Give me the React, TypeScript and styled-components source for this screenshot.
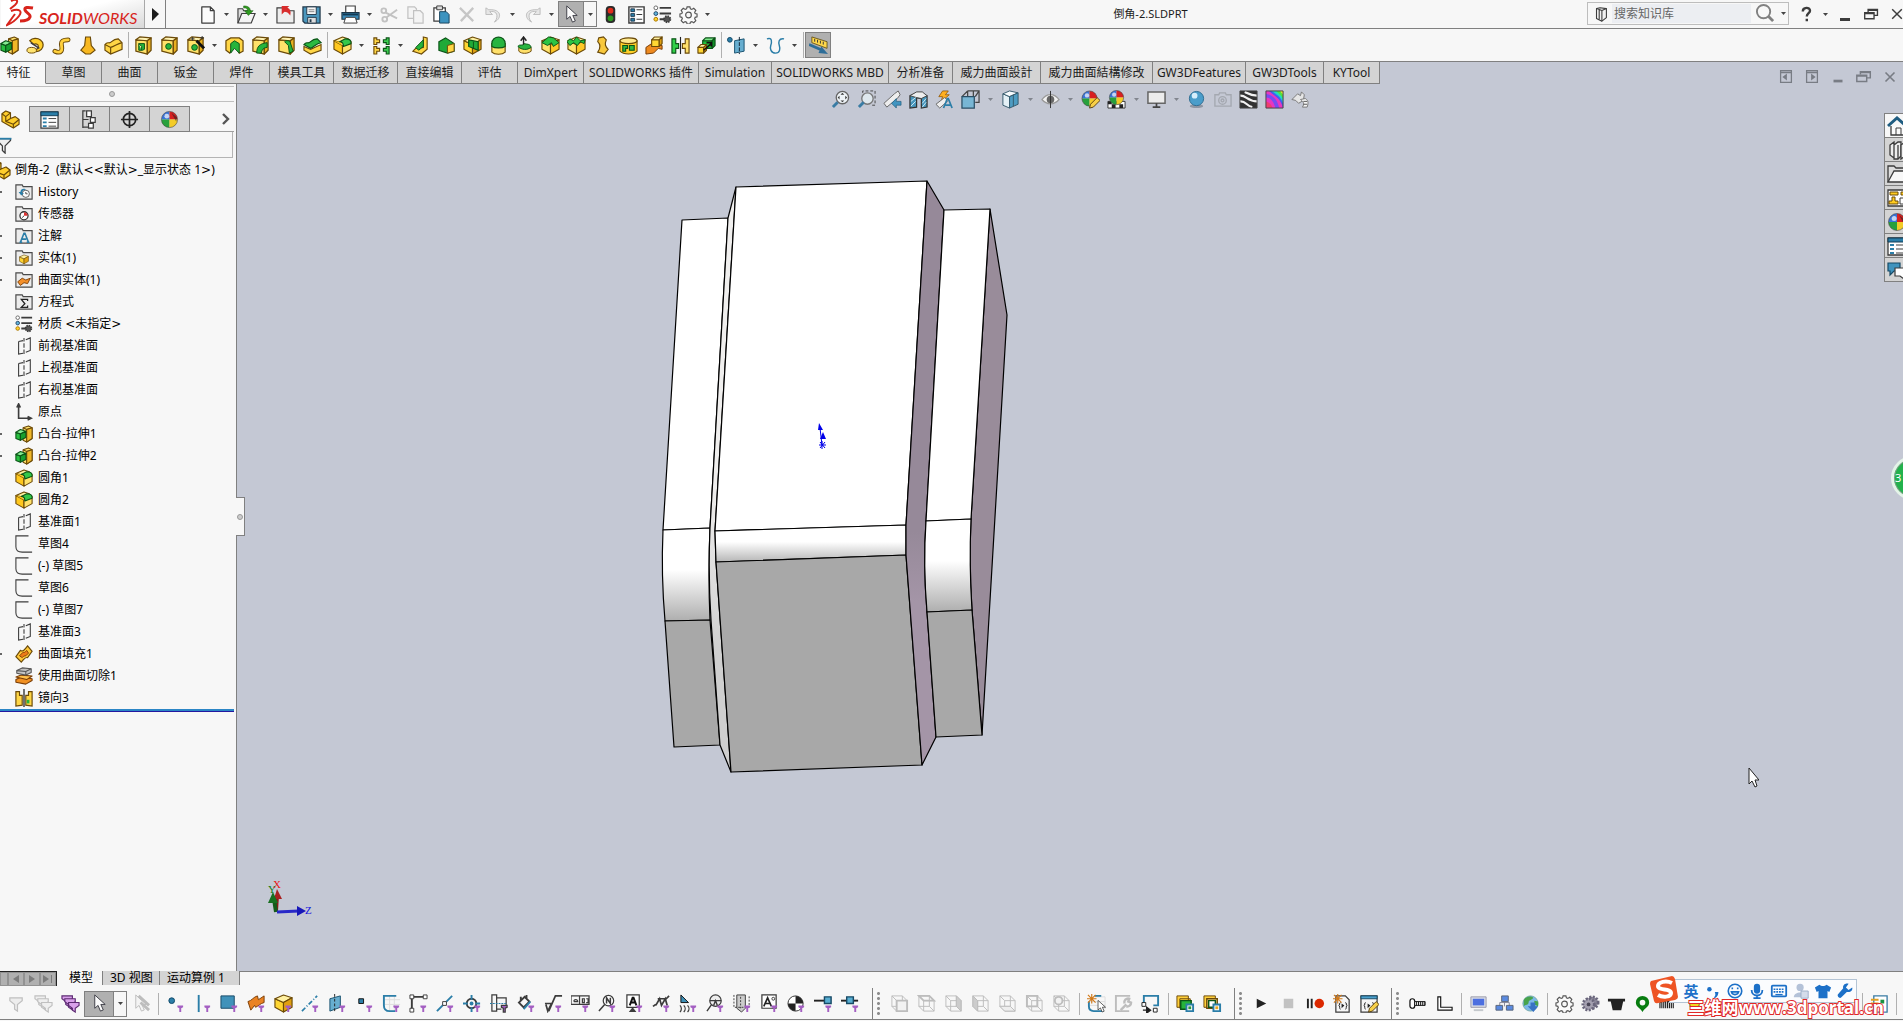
import React from "react";
import styled, { createGlobalStyle } from "styled-components";

const Global = createGlobalStyle`
  *, *::before, *::after { box-sizing: border-box; }
  body { margin: 0; background: #f7f7f7; color: #1c1c1c; overflow: hidden;
    font-family: "Noto Sans", "Noto Sans CJK SC", sans-serif; font-size: 12px; line-height: 18px; }
  button, input { font: inherit; color: inherit; }
  button { border: 0; padding: 0; background: none; cursor: default; }
  svg { display: block; flex: none; }
  ul { list-style: none; margin: 0; padding: 0; }
`;

const LINE = "#808080";
const FACE = "#f7f7f7";
const TAB = "#d4d4d4";
const SCENE = "#c4c8d4";

/* ---------- icon drawing helpers ---------- */
const YS = "#6b4a08";
const GS = "#0b5417";
const K = "#3c3c3c";
const B = "#2b7ea8";

type Tone = [string, string, string, string];
const YEL: Tone = ["#ffd633", "#fff0a0", "#e0a010", YS];
const GRN: Tone = ["#22c03c", "#7fe88c", "#12902a", GS];

const cube = (x: number, y: number, w: number, h: number, d: number, t: Tone) => (
  <g stroke={t[3]} strokeWidth="1.2" strokeLinejoin="round">
    <path d={`M${x} ${y + d}h${w}v${h}h${-w}z`} fill={t[0]} />
    <path d={`M${x} ${y + d}l${d} ${-d}h${w}l${-d} ${d}z`} fill={t[1]} />
    <path d={`M${x + w} ${y + d}l${d} ${-d}v${h}l${-d} ${d}z`} fill={t[2]} />
  </g>
);
const iso = (t: Tone) => (
  <g stroke={t[3]} strokeWidth="1.2" strokeLinejoin="round">
    <path d="M1 5l9 4v10l-9-5z" fill={t[0]} />
    <path d="M1 5l9-4 9 3-9 5z" fill={t[1]} />
    <path d="M19 4v10l-9 5V9z" fill={t[2]} />
  </g>
);
const plate = (
  <g stroke={YS} strokeWidth="1.3" strokeLinejoin="round">
    <path d="M2 4l12 1v14L2 16z" fill="#ffe26a" />
    <path d="M2 4l4-3 12 1-4 3z" fill="#fff3b4" />
    <path d="M14 5l4-3v13l-4 4z" fill="#e8b020" />
  </g>
);
const ball = (cx: number, cy: number, r: number) => (
  <g>
    <path d={`M${cx} ${cy}V${cy - r}A${r} ${r} 0 0 0 ${cx - r} ${cy}z`} fill="#3a74d8" />
    <path d={`M${cx} ${cy}V${cy - r}A${r} ${r} 0 0 1 ${cx + r} ${cy}z`} fill="#d82020" />
    <path d={`M${cx} ${cy}H${cx - r}A${r} ${r} 0 0 0 ${cx} ${cy + r}z`} fill="#28a03c" />
    <path d={`M${cx} ${cy}H${cx + r}A${r} ${r} 0 0 1 ${cx} ${cy + r}z`} fill="#f4cc28" />
    <circle cx={cx - r / 3} cy={cy - r / 2.4} r={r / 3.4} fill="#ffffff" opacity=".7" />
    <circle cx={cx} cy={cy} r={r} fill="none" stroke="#444" strokeWidth=".6" />
  </g>
);
const funnel = <path d="M12 12h6v2l-2 1v4h-2v-4l-2-1z" fill="#a45fc2" />;
const folder = <path d="M1 18V2h7l1 2h10v14z" fill="#ececec" stroke="#4a4a4a" strokeWidth="1.3" />;
const wire = (extra: React.ReactNode) => (
  <g fill="none" stroke="#bdbdbd">
    <path d="M2 2h11v11H2zM7 7h11v11H7zM2 2l5 5M13 2l5 5M2 13l5 5M13 13l5 5" />
    {extra}
  </g>
);
const pencil = <path d="M9 19l1-4 7-7 3 3-7 7z" fill="#f8d048" stroke="#5a4010" />;
const spark = <path d="M5 0v10M0 5h10M1 1l8 8M9 1L1 9" stroke="#d07818" strokeWidth="1.2" />;
const gear = (fill: string, stroke: string) => (
  <g fill={fill} stroke={stroke} strokeWidth="1.2">
    <path d="M8.500 2h3l.5 2 1.500.7 2-1.200 2.200 2.200-1.200 2 .5 1.300 2 .5v3l-2 .5-.5 1.500 1.200 2-2.200 2.200-2-1.200-1.500.5-.5 2h-3l-.5-2-1.500-.5-2 1.200-2.200-2.200 1.200-2-.5-1.500-2-.5v-3l2-.5.500-1.300-1.200-2 2.200-2.200 2 1.200L8 4z" />
    <circle cx="10" cy="10.500" r="3" fill={FACE} />
  </g>
);
const arrow = (fill: string, stroke: string) => (
  <path d="M5 1v14l3.500-3 2.500 6 3-1.200-2.600-5.800H16z" fill={fill} stroke={stroke} strokeLinejoin="round" />
);
const winTiles = (c: string) => <path d="M6 7V4h11v7h-4M2 8h11v7H2zM2 9h11M6 5h11" fill="none" stroke={c} strokeWidth="1.600" />;

const ICONS: Record<string, React.ReactNode> = {
  newDoc: <path d="M4 2h9l4 4v13H4zM13 2v4h4" fill="#fbfbfb" stroke={K} strokeWidth="1.300" strokeLinejoin="round" />,
  open: <g><path d="M1 19V4h5l1 2h7v4" fill="#ddd" stroke={K} strokeWidth="1.200" /><path d="M1 19l4-10h14l-4 10z" fill="#f4f4f4" stroke={K} strokeWidth="1.200" /><path d="M7 1c5 0 7 2 7 5h3l-5 5-4-5h3c0-2-1-3-4-3z" fill="#2f9a20" stroke="#1b6412" strokeWidth=".6" /></g>,
  publish: <g><path d="M1 3h6v3h12v13H1z" fill="#eee" stroke={K} strokeWidth="1.200" /><path d="M6 1h8l-2 2c3 1 4 4 3 8-2-3-4-4-6-4l-3 3z" fill="#d82c2c" /></g>,
  save: <g><path d="M1 2h18v17H3l-2-2z" fill="#4b97bd" stroke="#22384a" strokeWidth="1.300" /><path d="M5 2h10v8H5z" fill="#f5f5f5" stroke="#22384a" /><path d="M7 5h6M7 7h6" stroke="#888" /><path d="M6 13h9v6H6z" fill="#ddd" stroke="#22384a" /><path d="M8 15h2v3H8z" fill="#22384a" /></g>,
  print: <g><path d="M5 8V1h10v7" fill="#fff" stroke={K} strokeWidth="1.200" /><path d="M1 8h18v7H1z" fill="#3889b8" stroke="#1b3446" strokeWidth="1.200" /><path d="M5 13h10l2 6H3z" fill="#fff" stroke={K} /><path d="M2 10h16" stroke="#123a54" strokeWidth="2" /></g>,
  cut: <g fill="none" stroke="#c2c2c2" strokeWidth="2"><circle cx="4" cy="6" r="2.500" /><circle cx="5" cy="15" r="2.500" /><path d="M6 8l12 6M7 13L18 5" /></g>,
  copy: <g fill="#f4f4f4" stroke="#c2c2c2" strokeWidth="1.300"><path d="M2 2h7l2 2v10H2z" /><path d="M8 6h7l3 3v10H8z" /></g>,
  paste: <g><path d="M2 3h12v14H2z" fill="#fff" stroke={K} strokeWidth="1.300" /><path d="M5 1h6v4H5z" fill="#ddd" stroke={K} /><path d="M8 7h7l3 3v9H8z" fill="#3d93bf" stroke="#17425c" /></g>,
  del: <path d="M2 3l14 14M16 3L3 17" stroke="#c6c6c6" strokeWidth="2.400" />,
  undo: <path d="M2 3v7h7L6 7c6-1 9 2 7 8l-2 3c8-4 8-14-6-13z" fill="#e6e6e6" stroke="#bdbdbd" />,
  redo: <path d="M18 3v7h-7l3-3C8 6 5 9 7 15l2 3C1 14 1 4 15 5z" fill="#e6e6e6" stroke="#bdbdbd" />,
  select: arrow("#fbfbfb", "#3c3c44"),
  traffic: <g><rect x="5" y="1" width="10" height="18" rx="4" fill="#2c2c2c" /><circle cx="10" cy="6" r="3" fill="#e02c1c" /><circle cx="10" cy="14" r="3" fill="#2e9a22" /></g>,
  props: <g><path d="M2 2h16v17H2z" fill="#fff" stroke={K} strokeWidth="1.500" /><path d="M4 4h4v3H4zM4 9h4v3H4zM4 14h4v3H4z" fill={B} stroke="#123" strokeWidth=".8" /><path d="M10 5h6M10 10h6M10 15h6" stroke={K} strokeWidth="1.200" /></g>,
  options: <g><path d="M7 3h12M7 9h12M7 15h6" stroke={K} strokeWidth="2" /><circle cx="3" cy="3" r="2" fill="#fff" stroke="#666" /><circle cx="3" cy="9" r="2" fill="#5fb4dc" stroke="#246" /><circle cx="3" cy="15" r="2" fill="#ffd22e" stroke="#a70" /><circle cx="15" cy="15" r="3.200" fill="#555" stroke={K} strokeWidth="2" strokeDasharray="1.500 1" /></g>,
  gear: gear("#fafafa", "#555"),
  triangleRight: <path d="M7 4l7 6-7 7z" fill="#1c1c1c" />,
  /* feature toolbar */
  extrude: (
    <g strokeWidth="1.200" strokeLinejoin="round">
      <path d="M9 3l6-2 4 2v12l-6 4-4-2z" fill="#ffe06a" stroke={YS} />
      <path d="M9 3l4 2 6-2M13 5v14" fill="none" stroke={YS} />
      <path d="M13 5l6-2v12l-6 4z" fill="#f0b828" stroke={YS} />
      <path d="M1 8l5 2v7l-5-2z" fill="#28c040" stroke={GS} />
      <path d="M1 8l5-3 6 2-6 3z" fill="#86ec92" stroke={GS} />
      <path d="M6 10l6-3v7l-6 3z" fill="#18a030" stroke={GS} />
    </g>
  ),
  revolve: <g><path d="M4 5a8 7 0 1 1 1 10c4 1 8-1 8-4s-3-3-5-2z" fill="#ffcf2a" stroke={YS} strokeWidth="1.300" /><path d="M5 7l9 6" stroke={K} strokeWidth="1.500" /><ellipse cx="6" cy="15" rx="5" ry="3" fill="#ffe470" stroke={YS} /></g>,
  sweep: <g fill="none" strokeLinecap="round"><path d="M3 16c7 3 8-1 7-6s2-6 7-6" stroke={YS} strokeWidth="5" /><path d="M3 16c7 3 8-1 7-6s2-6 7-6" stroke="#ffd03c" strokeWidth="3" /></g>,
  loft: <path d="M8 1h5l1 9 4 5-5 4H8l-5-4 4-5z" fill="#f8b820" stroke={YS} strokeWidth="1.200" />,
  boundary: <g stroke={YS} strokeWidth="1.200"><path d="M1 9c3-4 4 0 7-3s5-3 7-3l4 4v7L7 19l-6-4z" fill="#ffd646" /><path d="M1 9l6 3c4-1 7-4 12-5" fill="none" /><path d="M7 12v7" /></g>,
  cutExtrude: <g>{plate}<path d="M5 8h6v6l-2 1H5z" fill="#26b43c" stroke={GS} /><path d="M5 8l3 3v4" fill="#fff4b0" stroke={GS} /></g>,
  hole: <g>{plate}<circle cx="9" cy="11" r="3" fill="#26b43c" stroke={GS} /></g>,
  wizard: <g>{plate}<circle cx="9" cy="12" r="3" fill="#26b43c" stroke={GS} /><path d="M11 5l8 8" stroke="#111" strokeWidth="3" /><path d="M7 1v4M5 3h4M17 0v3M15 2h4" stroke="#333" /></g>,
  cutRevolve: <g><path d="M1 5l5-3h9l4 3v11l-4 2-5-8-5 8-4-3z" fill="#ffd646" stroke={YS} strokeWidth="1.300" /><path d="M10 5l5 3v10l-5-5-4 5V8z" fill="#26b43c" stroke={GS} /></g>,
  cutSweep: <g>{plate}<path d="M6 18c0-7 3-10 11-11v5c-4 0-6 3-6 6z" fill="#26b43c" stroke={GS} /></g>,
  cutLoft: <g>{plate}<path d="M8 6c2-2 6-1 6 1l3 9-4 2-1-8z" fill="#26b43c" stroke={GS} /></g>,
  cutBoundary: <g stroke={YS} strokeWidth="1.200"><path d="M1 11l7 3 11-5v6L8 19l-7-4z" fill="#ffd646" /><path d="M1 9c3-4 4 0 7-3s5-3 7-3l4 4c-5 1-7 4-11 6z" fill="#2cba42" stroke={GS} /></g>,
  fillet: (
    <g stroke={YS} strokeWidth="1.200" strokeLinejoin="round">
      <path d="M1 5l9 5v9l-9-5z" fill="#ffc81e" />
      <path d="M1 5l9-4 6 2-7 4z" fill="#fff0a0" />
      <path d="M10 10l9-4v8l-9 5z" fill="#ffe26a" />
      <path d="M9 7c-1-1-4-1-8-2l9 5z" fill="#ffc81e" stroke="none" />
      <path d="M7 6l6-3c4 0 6 1 6 4v1l-8 3c0-3-1-5-4-5z" fill="#34c84a" stroke={GS} />
    </g>
  ),
  pattern: <g><path d="M2 2h3v2h3v3H5v2H2zM2 11h3v2h3v3H5v3H2z" fill="#ffd646" stroke={YS} strokeWidth="1.200" /><path d="M18 2h-3v2h-3v3h3v2h3zM18 11h-3v2h-3v3h3v3h3z" fill="#3ccc50" stroke={GS} strokeWidth="1.200" /></g>,
  rib: <g><path d="M13 1l4 1v12l-6 5-9-3 3-3 8-1z" fill="#ffd646" stroke={YS} strokeWidth="1.200" /><path d="M5 12l8-8v7l-5 4z" fill="#26b43c" stroke={GS} /></g>,
  draft: <g><path d="M2 6l7-4 9 6v8l-7 2-9-3z" fill="#20aa38" stroke={GS} strokeWidth="1.200" /><path d="M11 10l7-2v8l-7 2z" fill="#ffd646" stroke={YS} /></g>,
  shell: <g>{iso(YEL)}<path d="M6 4l10 2v9l-10-4z" fill="#20aa38" stroke={GS} strokeWidth="1.300" /><path d="M11 6v7" stroke={GS} /></g>,
  dome: <g stroke={YS} strokeWidth="1.200"><path d="M3 8v9c3 3 11 3 14 0V8z" fill="#ffe06a" /><path d="M3 11V8c0-9 14-9 14 0v3c-3 2-11 2-14 0z" fill="#28b440" stroke={GS} /></g>,
  freeform: <g><path d="M4 12v4c3 3 9 3 13 0v-4z" fill="#ffe06a" stroke={YS} /><path d="M3 11c2-3 5 0 7-3 3 1 6 0 7 4-4 3-10 3-14-1z" fill="#28b440" stroke={GS} /><path d="M9 9V2M6 5l3-4 3 4" stroke="#222" strokeWidth="1.500" fill="none" /></g>,
  deform: <g>{iso(["#ffe46c", "#fff0a0", "#ffc828", YS])}<path d="M1 7l7-6 5 1 6 5-6 4-2-4-4 3z" fill="#2cc444" stroke={GS} /></g>,
  flex: <g>{iso(["#ffe46c", "#fff0a0", "#ffc828", YS])}<path d="M0 6l3-3 4 2 3-4 4 4 5-1-1 4-4-2-3 4-4-3-4 3z" fill="#2cc444" stroke={GS} /></g>,
  indent: <path d="M6 2l5-1 3 3c-2 5-1 7 2 10l-4 5-7-2c3-4 3-8 0-11z" fill="#f8c83c" stroke={YS} strokeWidth="1.200" />,
  wrap: <g stroke={YS} strokeWidth="1.200"><path d="M1 5v11c4 4 14 4 18 0V5z" fill="#ffd028" /><ellipse cx="10" cy="5" rx="9" ry="3" fill="#ffe98c" /><path d="M4 10h5v3H7v3H4zM11 10h5v5h-5z" fill="#2cba42" stroke={GS} /></g>,
  intersect: <g><path d="M1 12l6-4 11 2v4l-4-1-5 5-8 1z" fill="#ee8a20" stroke="#743800" />{cube(7, 1, 8, 7, 3, YEL)}</g>,
  mirror: <g><path d="M1 3h4v5h3v5H5v5H1z" fill="#30d048" stroke={GS} strokeWidth="1.200" /><path d="M19 3h-4v5h-3v5h3v5h4z" fill="#ffe06a" stroke={YS} strokeWidth="1.200" /><path d="M10 1v18" stroke="#222" strokeWidth="1.200" /></g>,
  scale: <g>{cube(6, 2, 10, 8, 3, GRN)}{cube(1, 9, 6, 6, 3, YEL)}<path d="M7 15l8-7M10 7h5v4" stroke="#111" strokeWidth="1.700" fill="none" /></g>,
  refPlane: <g><circle cx="3" cy="4" r="2.500" fill={B} stroke="#0f4766" /><path d="M8 5l10-2v13L8 18z" fill="#67aed0" stroke="#17506e" /><path d="M13 1v18" stroke="#123" strokeDasharray="4 1.500" /></g>,
  curve: <path d="M1 3c6-2 5 4 4 7s0 8 5 8 5-5 4-8-1-8 5-7" fill="none" stroke="#2b7ea8" strokeWidth="1.500" />,
  ruler: <g><path d="M3 1l16 5v7L3 7z" fill="#ffd84a" stroke="#6b5a20" /><path d="M6 3v3M9 4v3M12 5v3M15 6v3" stroke="#333" /><path d="M0 9l14 6" stroke="#2d6d98" strokeWidth="3" /><path d="M13 11l7 8-10-1z" fill="#2d6d98" /></g>,
  /* tree panel */
  part: <g stroke={YS} strokeWidth="1.200" strokeLinejoin="round"><path d="M1 4l4-3 5 2v6l5-2 4 3v5l-6 4-12-7z" fill="#ffce2c" /><path d="M1 4l4 3 5-4M5 7v5l8 3 6-5M13 15v4M5 12l5-3" fill="none" /></g>,
  listPane: <g><path d="M1 2h18v17H1z" fill="#fff" stroke={K} strokeWidth="1.300" /><path d="M1 2h18v4H1z" fill={B} stroke="#123c54" /><path d="M3 8h4v2H3zM3 12h4v2H3zM3 16h4v2H3z" fill={B} /><path d="M9 9h8M9 13h8M9 17h8" stroke={K} /></g>,
  config: <g fill="none" stroke={K} strokeWidth="1.300"><path d="M6 1H3v18M3 10h6M3 18h6" /><path d="M7 1h5v6H7zM11 8h5v5h-5zM9 14h5v5H9z" fill="#fff" /></g>,
  target: <g fill="none" stroke="#222" strokeWidth="1.800"><circle cx="10" cy="10" r="6.500" /><path d="M10 1v18M1 10h18" /></g>,
  appearance: <g>{ball(10, 10, 8.500)}<path d="M12 3l6 5-1 4z" fill="#222" opacity=".55" /></g>,
  filter: <g><path d="M0 3h15v2l-6 6v8l-3-3v-5L0 5z" fill="#eee" stroke={K} strokeWidth="1.400" /><path d="M0 2h16v2H0z" fill={B} /></g>,
  history: <g>{folder}<circle cx="12" cy="12" r="4" fill="#fff" stroke="#555" /><path d="M12 10v2h2" stroke="#444" fill="none" /><path d="M4 10l3 4 3-3H8c0-3 3-4 5-3-2-3-7-2-7 2z" fill={B} /></g>,
  sensor: <g>{folder}<circle cx="10" cy="12" r="4.500" fill="#fff" stroke="#333" strokeWidth="1.400" /><path d="M10 12V8a4 4 0 0 1 4 4z" fill="#dd3434" /><path d="M10 12l-2 2" stroke="#222" /></g>,
  note: <g>{folder}<path d="M6 17l4-10h1l4 10M7.500 13.500h5M5 17h3M13 17h3" fill="none" stroke={B} strokeWidth="1.800" /></g>,
  solids: <g>{folder}<g transform="translate(4.500 6) scale(.55)">{iso(YEL)}</g></g>,
  surfaces: <g>{folder}<path d="M3 12l5-4 4 2 5-2-3 6-4-1-4 3z" fill="#f4902a" stroke="#7a3c04" /></g>,
  sigma: <g>{folder}<path d="M14 9V7H7l4 5-4 4h7v-2" fill="none" stroke="#222" strokeWidth="1.400" /></g>,
  plane: <g fill="none" stroke={K} strokeWidth="1.200"><path d="M4 5l5-1M12 3l5-2v14l-5 2M9 18l-5 1V5" /><path d="M10 1v4M10 7v5M10 14v5" /></g>,
  origin: <path d="M4 1v16h13M2 5l2-4 2 4M14 15l4 2-4 2" fill="none" stroke={K} strokeWidth="1.800" />,
  sketch: <path d="M15 1H1v12c0 4 3 6 7 6h11" fill="none" stroke={K} strokeWidth="1.200" />,
  surfFill: <g><path d="M1 13l5-7c3 2 5-1 8-5l5 6-5 7c-3-1-4 2-7 5z" fill="#ffc838" stroke={YS} strokeWidth="1.300" /><path d="M5 12l4-4c2 1 3-1 4-2l2 3-3 3c-2 0-3 1-4 2z" fill="#ee7a18" stroke="#7a3c04" /></g>,
  surfCut: <g strokeWidth="1.200" strokeLinejoin="round"><path d="M1 14l6-3 12 2v2l-7 4-11-2z" fill="#f09022" stroke="#7a3c04" /><path d="M1 11l6-2 12 1-6 4z" fill="#ffc04c" stroke="#7a3c04" /><path d="M2 4l6-3 10 1v4l-6 3-10-2z" fill="#c4c4c4" stroke="#555" /><path d="M2 4l10 1 6-3M12 5v4" fill="none" stroke="#555" /></g>,
  mirrorPart: <g><path d="M1 3h4v4h3v11l-7 1z" fill="#ffd646" stroke={YS} strokeWidth="1.300" /><path d="M19 3h-4v4h-3v11l7 1z" fill="#ffd646" stroke={YS} strokeWidth="1.300" /><path d="M13 12h3v4h-3z" fill="#26b43c" /><path d="M10 0v20" stroke="#222" strokeWidth="1.400" /></g>,
  /* heads-up view toolbar */
  zoomFit: <g><circle cx="12" cy="8" r="6.500" fill="#eef3f7" stroke="#666" strokeWidth="1.400" /><path d="M12 3l2 2h-4zM12 13l2-2h-4zM7 8l2 2V6zM17 8l-2 2V6z" fill={K} /><path d="M7 13l-5 5" stroke="#3a7ca4" strokeWidth="3" /></g>,
  zoomArea: <g><path d="M6 3V1h13v15h-3" fill="none" stroke="#444" strokeDasharray="3 2" /><circle cx="11" cy="9" r="6" fill="#dfe8ee" stroke="#777" strokeWidth="1.400" /><path d="M7 13l-5 5" stroke="#3a7ca4" strokeWidth="3" /></g>,
  prevView: <g><path d="M1 14L12 4l4-3 2 4-3 4L4 18z" fill="#eee" stroke="#666" /><path d="M9 14l5-5v3h5v4h-5v3z" fill="#4094c0" stroke="#205a7a" strokeWidth=".7" /></g>,
  section: <g><path d="M1 6l7-3 11 3v12l-6 1V9l-5-1v10l-7 1z" fill="#4796bc" stroke="#333" strokeWidth="1.300" /><path d="M1 6l7-4h6l5 4-6 3-5-1z" fill="#eee" stroke="#444" /><path d="M2 12l5-4M2 17l5-5M14 14l4-5M14 18l4-5" stroke="#d7ecf5" /></g>,
  annoView: <g><path d="M8 1h6l-3 4h4l-9 8 2-6H4z" fill="#ffb020" stroke="#8c5200" strokeWidth=".8" /><path d="M1 15l9-7 4 3-9 8z" fill="#eee" stroke="#666" /><path d="M9 19l4-10h1l4 10M11 16h5" stroke={B} fill="none" strokeWidth="1.800" /></g>,
  orient: <g fill="none" stroke="#444" strokeWidth="1.300"><path d="M7 1h12v12h-4M7 1v6M1 7l6-6M15 7l4-6M13 1v6" /><path d="M1 7h13v12H1z" fill="#78b6d4" stroke="#2a4e64" /></g>,
  display: <g stroke="#34586c"><path d="M2 4l7 3v12l-7-3z" fill="#e4f0f6" /><path d="M2 4l7-3 9 2-9 4z" fill="#f8fcfe" /><path d="M9 7l9-4v12l-9 4z" fill="#4e9cc2" /><path d="M13 5v12" /></g>,
  eye: <g><path d="M1 10c5-7 13-7 18 0-5 6-13 6-18 0z" fill="#f2f2f2" stroke="#9a9a9a" strokeWidth="1.300" /><circle cx="10" cy="10" r="4" fill="#666" /><path d="M10 1v18" stroke="#333" /></g>,
  editApp: <g>{ball(9, 9, 8)}{pencil}</g>,
  scene: <g><path d="M1 12h18v7H1z" fill="#fff" stroke="#333" /><path d="M1 12h4v3H1zM9 12h4v3H9zM5 15h4v4H5zM13 15h4v4h-4z" fill="#222" />{ball(10, 8, 7.500)}</g>,
  monitor: <g><path d="M1 2h18v12H1z" fill="#ececec" stroke="#666" strokeWidth="1.600" /><path d="M10 14v4M6 18h8" stroke="#444" strokeWidth="1.800" /></g>,
  sphere: <g><ellipse cx="10" cy="17" rx="7" ry="2" fill="#8e95a2" /><circle cx="10" cy="9" r="7.500" fill="#4a9dca" stroke="#2c6c90" /><circle cx="8" cy="6" r="3" fill="#d6eefb" /></g>,
  camera: <g fill="none" stroke="#a4a8b0" strokeWidth="1.400"><path d="M2 5h4l1-2h6l1 2h5v12H2z" /><circle cx="10" cy="11" r="4" /><circle cx="10" cy="11" r="1.500" /></g>,
  zebra: <g><path d="M1 1h18v18H1z" fill="#333" /><path d="M1 6c6-1 8 6 18 6M1 12c6-1 7 5 13 6M6 2c3 1 5 4 13 4" fill="none" stroke="#f2f2f2" strokeWidth="2.300" /><path d="M1 1h18v18H1z" fill="none" stroke="#444" /></g>,
  rainbow: <g><path d="M1 1h18v18H1z" fill="#e836c0" /><path d="M4 1h15v18C16 8 11 7 4 1z" fill="#4060f0" /><path d="M1 4c9 2 12 7 14 15h-4C9 12 6 8 1 8z" fill="#7a4af0" /><path d="M7 1h12v13C17 7 12 5 7 1z" fill="#20d8c0" /><path d="M12 1h7v8c-2-4-5-5-7-8z" fill="#52e03c" /><path d="M16 1h3v4z" fill="#ffe02c" /><path d="M1 12c4 1 6 4 7 7H1z" fill="#f03c70" /><path d="M1 1h18v18H1z" fill="none" stroke="#444" /></g>,
  measure: <g><path d="M1 10l6-6 3 2 1-4 3 3-1 6-5 3-3-3z" fill="#e6e6e6" stroke="#777" /><path d="M10 10l5-1c4 2 3 6 2 9h-5c2-3 2-5-2-8z" fill="#f4f4f4" stroke="#777" /><path d="M13 12h4M13 15h4" stroke="#555" /></g>,
  /* window controls */
  help: <path d="M6 7c0-6 9-6 9-1 0 3-4 3-4 7M11 16v3" fill="none" stroke="#3c3c3c" strokeWidth="3" />,
  min: <path d="M5 14h10v3H5z" fill={K} />,
  restore: winTiles(K),
  close: <path d="M4 4l12 12M16 4L4 16" stroke={K} strokeWidth="1.800" />,
  docLeft: <g fill="none" stroke="#787c84" strokeWidth="1.400"><path d="M4 3h12v13H4zM4 5h12" /><path d="M11 6l-5 4 5 4z" fill="#787c84" stroke="none" /></g>,
  docRight: <g fill="none" stroke="#787c84" strokeWidth="1.400"><path d="M4 3h12v13H4zM4 5h12" /><path d="M9 6l5 4-5 4z" fill="#787c84" stroke="none" /></g>,
  docMin: <path d="M5 13h10v3H5z" fill="#787c84" />,
  docRestore: winTiles("#787c84"),
  docClose: <path d="M5 5l10 10M15 5L5 15" stroke="#787c84" strokeWidth="1.800" />,
  book: <g stroke={K} strokeWidth="1.200" strokeLinejoin="round"><path d="M5 4l4-1 7 1v10l-5 4-6-3z" fill="#f2f2f2" /><path d="M8 5v11M11 6v12M5 4l6 2 5-2" fill="none" /></g>,
  magnifier: <g fill="none" stroke="#808080"><circle cx="9" cy="8" r="7" strokeWidth="2" /><path d="M14 13l5 5" strokeWidth="3" /></g>,
  /* task pane */
  home: <g><path d="M4 10v9h14v-9" fill="#fafafa" stroke={K} strokeWidth="1.300" /><path d="M9 19v-7h5v7" fill="none" stroke={K} /><path d="M1 10l9-8 9 8" fill="none" stroke="#1e5c80" strokeWidth="3" /></g>,
  library: <g fill="#eee" stroke={K} strokeWidth="1.300"><path d="M3 5l4-3v16l-4-3zM7 5l4-3h3v14l-3 3H7z" /><path d="M11 5v14M14 5l4-3v14l-4 3z" /></g>,
  folderOpen: <g stroke={K} strokeWidth="1.300"><path d="M1 18V2h6l2 2h9v4" fill="#ddd" /><path d="M1 18l6-11h13v11z" fill="#f8f8f8" /></g>,
  palette: <g><path d="M1 2h19v16H1z" fill="#fff" stroke={K} strokeWidth="1.300" /><path d="M3 4h8v3H3zM14 4h6v3h-6zM5 9h3v4h3v3H2v-3h3z" fill="#ffcc20" stroke={YS} /><path d="M13 10h6v6h-6z" fill="none" stroke={K} /></g>,
  chat: <g><path d="M1 3h12v8H7l-4 4v-4H1z" fill="#3f93bd" stroke="#174a66" strokeWidth="1.200" /><path d="M8 8h12v8h-3v3l-4-3H8z" fill="#fff" stroke={K} strokeWidth="1.200" /></g>,
  /* selection filters */
  filterOff: <path d="M3 4h13v3l-5 4v7l-3-2v-5L3 7z" fill="#ededed" stroke="#c0c0c0" strokeWidth="1.300" />,
  filtersOff: <g fill="#efefef" stroke="#c0c0c0" strokeWidth="1.200"><path d="M1 2h11v3l-4 3v5l-3-2V8L1 5z" /><path d="M4 5h11v3l-4 3v5l-3-2v-3L4 8z" /><path d="M8 9h11v3l-4 3v4l-3-2v-2l-4-3z" /></g>,
  filters: <g fill="#d9a0ea" stroke="#5c2a72" strokeWidth="1.200"><path d="M1 2h11v3l-4 3v5l-3-2V8L1 5z" /><path d="M4 5h11v3l-4 3v5l-3-2v-3L4 8z" /><path d="M8 9h11v3l-4 3v4l-3-2v-2l-4-3z" /></g>,
  selectOff: <g>{arrow("#f4f4f4", "#bdbdbd")}<path d="M8 2l11 10M10 9l9 8" stroke="#bdbdbd" strokeWidth="3" /></g>,
  fVertex: <g><circle cx="6" cy="7" r="3" fill={B} stroke="#0f4766" />{funnel}</g>,
  fEdge: <g><path d="M6 1v18" stroke={B} strokeWidth="2" />{funnel}</g>,
  fFace: <g><path d="M1 2h14v13H1z" fill="#4092ba" stroke="#174a66" />{funnel}</g>,
  fSurface: <g><path d="M1 8c4-1 6-5 10-6l1 4 6-4v7c-4 1-5 3-9 5l-1-2-4 5z" fill="#ea8222" stroke="#7a3c04" />{funnel}</g>,
  fSolid: <g>{iso(YEL)}{funnel}</g>,
  fAxis: <g><path d="M1 18L17 2" stroke={B} strokeWidth="1.800" strokeDasharray="5 2 1 2" />{funnel}</g>,
  fPlane: <g><path d="M2 5l11-3v12L2 18z" fill="#67aed0" stroke="#17506e" /><path d="M7 0v19" stroke="#222" strokeDasharray="3 2" />{funnel}</g>,
  fPoint: <g><path d="M4 5h5v5H4z" fill={B} stroke="#111" />{funnel}</g>,
  fSketch: <g><path d="M8 1v17M13 1v17M3 6h16M3 11h16" stroke="#ddd" /><path d="M15 2H2v10c0 4 2 6 6 6h6" fill="none" stroke={B} strokeWidth="2" />{funnel}</g>,
  fSegment: <g><path d="M3 18V3h14" stroke={K} strokeWidth="2" fill="none" /><path d="M1 1h4v4H1zM15 1h4v4h-4zM1 15h4v4H1z" fill="#fff" stroke={K} />{funnel}</g>,
  fMid: <g><path d="M1 18L17 2" stroke={B} strokeWidth="2" /><path d="M7 8h4v4H7z" fill="#fff" stroke={K} />{funnel}</g>,
  fCenter: <g><circle cx="9" cy="10" r="5" fill="none" stroke={K} strokeWidth="2" /><path d="M9 1v5M9 14v5M0 10h5M13 10h5" stroke={B} strokeWidth="2" /><circle cx="9" cy="10" r="2" fill={B} />{funnel}</g>,
  fCline: <g fill="none" stroke={K} strokeWidth="1.300"><path d="M2 1h5v17H2zM7 4h10v8M7 16h5" /><path d="M0 10h18" stroke={B} strokeDasharray="2 1" />{funnel}</g>,
  fDim: <g><path d="M2 9l6-6 5 5-6 6zM4 3v4M10 1v4" fill="none" stroke={K} strokeWidth="2" /><path d="M7 16l7-8" stroke={B} strokeWidth="2" />{funnel}</g>,
  fFinish: <g><path d="M1 10h7l-4 8-2-7M5 18l7-16h7" fill="none" stroke={K} strokeWidth="1.800" />{funnel}</g>,
  fGtol: <g><path d="M0 2h19v9H0zM9 2v9M3 8h4a2 2 0 0 0-4 0M12 5h2v4h-2zM16 5h2v4h-2" fill="none" stroke={K} strokeWidth="1.300" />{funnel}</g>,
  fNote: <g><circle cx="11" cy="7" r="5.500" fill="#fff" stroke={K} strokeWidth="1.300" /><path d="M9 10V4l4 6V4M7 11l-6 7" fill="none" stroke={K} strokeWidth="1.600" />{funnel}</g>,
  fDatum: <g><path d="M2 1h13v13H2z" fill="#fff" stroke={K} strokeWidth="1.300" /><path d="M5 12l3-8h1l3 8M6 9h5" fill="none" stroke="#111" strokeWidth="2" /><path d="M8 14l4 5H4z" fill={K} />{funnel}</g>,
  fWeld: <g><path d="M1 13l3-2M4 12l4-7 2 7 4-7 2 7M6 5h9l3-3" fill="none" stroke={K} strokeWidth="1.800" />{funnel}</g>,
  fWeldBead: <g><path d="M2 1v8h8z" fill="#3c8fb6" stroke="#111" /><path d="M1 12c2 2 2 5 0 7M5 12c2 2 2 5 0 7M9 12c2 2 2 5 0 7" stroke={K} fill="none" strokeWidth="1.300" />{funnel}</g>,
  fTarget: <g><circle cx="10" cy="7" r="6" fill="#eee" stroke={K} strokeWidth="1.300" /><path d="M4 7h12M8 12l2-5 2 5M6 11l-5 7" fill="none" stroke={K} strokeWidth="1.500" />{funnel}</g>,
  fThread: <g><path d="M4 1h9v14l-4 4-5-4z" fill="#ccc" stroke={K} /><path d="M1 1v13h16V1M8 3v12" fill="none" stroke={K} strokeDasharray="2 1.500" />{funnel}</g>,
  fBlock: <g><path d="M2 1h15v14H2z" fill="#fff" stroke={K} strokeWidth="1.300" /><path d="M4 13l4-9 4 9M6 10h4" fill="none" stroke="#222" strokeWidth="1.700" /><circle cx="14" cy="5" r="1.500" fill="none" stroke={K} />{funnel}</g>,
  fMass: <g><circle cx="9" cy="10" r="8" fill="#fff" stroke="#333" /><path d="M9 2a8 8 0 0 1 8 8H9zM9 10v8a8 8 0 0 1-8-8z" fill="#222" />{funnel}</g>,
  fConn: <g><path d="M0 7h12" stroke="#222" strokeWidth="2" /><path d="M11 3h7v7h-7z" fill="#58aed2" stroke="#174a66" strokeWidth="1.500" />{funnel}</g>,
  fRoute: <g><path d="M0 7h18" stroke="#222" strokeWidth="2" /><path d="M6 3h7v7H6z" fill="#58aed2" stroke="#174a66" strokeWidth="1.500" />{funnel}</g>,
  cubeFront: wire(<path d="M7 7h11v11H7z" strokeWidth="2" fill="#f2f2f2" />),
  cubeBack: wire(<path d="M2 2h11l5 5H7z" strokeWidth="2" />),
  cubeRight: wire(<path d="M13 2l5 5v11l-5-5z" fill="#ccc" />),
  cubeLeft: wire(<path d="M2 2l5 5v11l-5-5z" fill="#ccc" />),
  cubeBottom: wire(<path d="M2 13h11l5 5H7z" fill="#eee" />),
  cubeTop: wire(<path d="M2 2h11v11H2z" strokeWidth="2" />),
  cubeIso: wire(<circle cx="7" cy="7" r="4" strokeWidth="2" fill="#f2f2f2" />),
  sketchPick: <g><path d="M8 3h11v13M3 8h16M3 12h16" stroke="#ddd" fill="none" /><path d="M15 2H8M2 8v5c0 3 2 5 5 5h10" fill="none" stroke={B} strokeWidth="2" />{spark}<g transform="translate(8 6) scale(.72)">{arrow("#fff", "#222")}</g></g>,
  sketchTool: <g fill="none" stroke="#bdbdbd"><path d="M17 2H2v16h14" strokeWidth="2" /><path d="M7 17l6-6M11 10a4 4 0 0 1 5-5l-1 3 3 1a4 4 0 0 1-5 4" strokeWidth="2.500" /></g>,
  sketchMove: <g><path d="M3 10V2h15v10h-5" fill="none" stroke={B} strokeWidth="2" /><path d="M1 9h4v4H1zM13 15h4v4h-4z" fill="#fff" stroke="#222" /><path d="M2 17h6M6 14l4 3-4 3z" stroke="#222" strokeWidth="1.500" /></g>,
  stackG: <g><path d="M1 2h12v12H1zM4 5h11v10H4z" fill="#ffd03a" stroke={YS} /><path d="M5 7h11v9H5z" fill="#26b43c" stroke={GS} strokeWidth="1.500" /><path d="M11 11h7v7h-7z" fill="#fff" stroke={B} strokeWidth="2" /><path d="M13 13h3v3h-3z" fill="#2a9a3c" /></g>,
  stackY: <g><path d="M1 2h12v12H1z" fill="#ffd03a" stroke={YS} /><path d="M4 5h11v10H4z" fill="#ffe98c" stroke={YS} strokeWidth="1.500" /><path d="M6 7h7v7H6z" fill="#fff" stroke={GS} strokeWidth="1.500" /><path d="M11 11h7v7h-7z" fill="#fff" stroke={B} strokeWidth="2" /><path d="M13 13h3v3h-3z" fill="#e8a820" /></g>,
  play: <path d="M5 5l10 5-10 5z" fill="#222" />,
  stop: <path d="M5 5h10v10H5z" fill="#c2c2c2" />,
  record: <g><path d="M1 5h2v10H1zM5 5h2v10H5z" fill="#222" /><circle cx="14" cy="10" r="5" fill="#dc2800" /></g>,
  macroNew: <g><path d="M3 2h10l4 4v13H3z" fill="#f6f6f6" stroke={K} strokeWidth="1.300" /><path d="M8 9c-2 0 0 3-2 3 2 0 0 4 2 4M13 9c2 0 0 3 2 3-2 0 0 4-2 4" fill="none" stroke="#222" /><path d="M9 10l3 2-3 3z" fill="#222" />{spark}</g>,
  macroEdit: <g><path d="M1 2h17v17H1z" fill="#f6f6f6" stroke={K} strokeWidth="1.300" /><path d="M1 2h17v3H1z" fill="#4aa0cc" stroke="#174a66" /><path d="M6 9c-2 0 0 3-2 3 2 0 0 4 2 4M13 9c2 0 0 2 2 3" fill="none" stroke="#222" /><path d="M8 10l3 2-3 3z" fill="#222" />{pencil}</g>,
  bolt: <g fill="#fff" stroke="#111"><rect x="1" y="5" width="5" height="10" rx="2.500" strokeWidth="1.300" /><path d="M6 8h11v4H6z" /><path d="M8 8v4M10 8v4M12 8v4M14 8v4M16 8v4" /></g>,
  angle: <path d="M3 3h3v11h12v3H3z" fill="#fff" stroke="#111" strokeWidth="1.200" />,
  pc: <g><path d="M2 3h16v11H2z" fill="#d8dce6" stroke="#99a" /><path d="M4 5h12v7H4z" fill="#4c6fe0" /><path d="M5 16h10v2H5z" fill="#c4c8cc" /></g>,
  net: <g><path d="M10 8v5M5 13V9h10v4" stroke="#889" fill="none" /><path d="M7 2h7v6H7zM1 12h7v5H1zM12 12h7v5h-7z" fill="#5a8ae0" stroke="#5a6478" /></g>,
  globe: <g><circle cx="10" cy="10" r="8" fill="#7cb8ea" stroke="#7aa" /><path d="M3 6c3-4 8-4 10-2-2 3-5 2-5 5s-4 2-5 4zM14 7l4 1v5l-4-2z" fill="#48a44c" /><path d="M10 9h5v4h3l-5 6-6-6h3z" fill="#3872c4" /></g>,
  gearDark: <g><circle cx="12" cy="9" r="6" fill="#8a8698" stroke="#6a667c" strokeWidth="3" strokeDasharray="2 1.500" /><circle cx="8" cy="11" r="6" fill="#a4a0b0" stroke="#6a667c" strokeWidth="3" strokeDasharray="2 1.500" /><circle cx="8" cy="11" r="2" fill="#4a4658" /></g>,
  trayIcon: <path d="M1 5h18v3h-2l-2 9H6L4 8H1z" fill="#222" />,
  pin: <path d="M10 2a7 7 0 0 1 7 7c0 5-5 6-7 10-2-4-7-5-7-10a7 7 0 0 1 7-7zm0 4a3 3 0 1 0 0 6 3 3 0 0 0 0-6z" fill="#087c10" fillRule="evenodd" />,
  spring: <path d="M1 15V9l2-1v7M5 15V8h2v7M9 15V8h2v7M13 15V8h2v7" fill="none" stroke="#222" strokeWidth="1.200" />,
  bulb: <circle cx="10" cy="11" r="5" fill="#f0d820" stroke="#665a10" />,
  tray2: <g><path d="M4 2h14v17H4z" fill="#fff" stroke="#3a7ca4" strokeWidth="1.400" /><path d="M11 6h4v4h-4z" fill="#1a9040" /><path d="M1 6h8M1 10h8" stroke="#e0a020" strokeWidth="2" /></g>,
  /* input method bar */
  comma: <g fill="#1c70c8"><circle cx="6" cy="8" r="2.500" /><path d="M12 11h4c0 3-1 5-4 7l-1-1c2-2 2-3 1-6z" /></g>,
  smile: <g fill="none" stroke="#1c70c8" strokeWidth="1.800"><circle cx="10" cy="10" r="7.500" /><path d="M6 11c1 4 7 4 8 0z" /><path d="M7 6v2M13 6v2" /></g>,
  mic: <g stroke="#1c70c8" strokeWidth="2"><rect x="7.500" y="3" width="5" height="9" rx="2.500" fill="#1c70c8" /><path d="M4 9c0 8 12 8 12 0M10 15v3M6 18h8" fill="none" /></g>,
  keys: <g fill="none" stroke="#1c70c8"><rect x="2" y="4" width="16" height="12" rx="1" strokeWidth="2" /><path d="M4 8h12M4 11h12" strokeWidth="1.800" strokeDasharray="2 1" /><path d="M6 14h8" strokeWidth="1.500" /></g>,
  person: <g fill="#b4c2d8"><circle cx="9" cy="6" r="4" /><path d="M2 17c0-7 14-7 14 0z" /><path d="M10 10h8v8h-8z" fill="#d4dcea" stroke="#9aabc6" /></g>,
  shirt: <path d="M6 3c2 2 6 2 8 0l5 3-2 5-2-1v8H5v-8l-2 1-2-5z" fill="#1c70c8" />,
  wrench: <path d="M18 6l-4 3-3-3 3-4c-4-1-7 2-6 5l-6 7c-1 2 2 5 4 3l6-6c4 1 7-2 6-5z" fill="#1c70c8" />,
  chevron: <path d="M7 5l5 5-5 5" fill="none" stroke="#555" strokeWidth="2.400" />,
};

const Icon = ({ name, size = 20 }: { name: string; size?: number }) => (
  <svg width={size} height={size} viewBox="0 0 20 20" aria-hidden="true">{ICONS[name]}</svg>
);

/* ---------- shared parts ---------- */
const IconButton = styled.button<{ $w?: number; $pressed?: boolean }>`
  width: ${(p) => p.$w ?? 26}px;
  height: 26px;
  flex: none;
  display: flex;
  align-items: center;
  justify-content: center;
  ${(p) => p.$pressed && `background: #b0b0b0; border: 1px solid ${LINE};`}
`;
const CaretButton = styled.button<{ $w?: number; $boxed?: boolean }>`
  width: ${(p) => p.$w ?? 13}px;
  height: 26px;
  flex: none;
  display: flex;
  align-items: center;
  justify-content: center;
  color: ${(p) => (p.$w ? "#81858e" : "#444")};
  ${(p) => p.$boxed && `border: 1px solid ${LINE}; border-left: 0;`}
`;
const Caret = (p: { w?: number; boxed?: boolean }) => (
  <CaretButton $w={p.w} $boxed={p.boxed} aria-label="更多">
    <svg width="5" height="3" viewBox="0 0 5 3"><path d="M0 0h5L2.500 3z" fill="currentColor" /></svg>
  </CaretButton>
);
const Divider = styled.span<{ $w: number; $h: number }>`
  width: ${(p) => p.$w}px;
  height: ${(p) => p.$h}px;
  flex: none;
  background: linear-gradient(#b0b0b0, #b0b0b0) center / 1px 100% no-repeat;
`;
const GroupGrip = styled.span`
  width: 22px;
  align-self: stretch;
  flex: none;
  display: flex;
  gap: 4px;
  padding-left: 8px;
  &::before { content: ""; width: 1px; background: ${LINE}; }
  &::after { content: ""; width: 3px; margin: 3px 0; background: radial-gradient(circle, #8c8c8c 1px, transparent 2px) 0 0 / 3px 5px; }
`;

type Item = string;
/* "v" is a drop-down arrow, "|" a divider, ":" a toolbar grip, "!" marks a pressed button */
const Strip = ({ items, w, caret, sep = 4, sepH = 26 }: { items: Item[]; w?: number; caret?: number; sep?: number; sepH?: number }) => (
  <>
    {items.map((it, i) => {
      if (it === "v") return <Caret key={i} w={caret} boxed={items[i - 1].startsWith("!")} />;
      if (it === "|") return <Divider key={i} $w={sep} $h={sepH} />;
      if (it === ":") return <GroupGrip key={i} />;
      const pressed = it.startsWith("!");
      const name = pressed ? it.slice(1) : it;
      return (
        <IconButton key={i} $w={pressed && w === 27 ? 30 : w} $pressed={pressed} aria-label={name}>
          <Icon name={name} size={19} />
        </IconButton>
      );
    })}
  </>
);

/* ---------- frame ---------- */
const Shell = styled.div`
  height: 100vh;
  display: flex;
  flex-direction: column;
  background: ${FACE};
`;
const TitleBar = styled.header`
  height: 29px;
  flex: none;
  display: flex;
  border-bottom: 1px solid ${LINE};
`;
const Brand = styled.div`
  width: 144px;
  margin-left: 1px;
  padding-left: 5px;
  display: flex;
  align-items: center;
  color: #d8241c;
  background: linear-gradient(165deg, #fff 45%, #d9d9d9);
  border-right: 1px solid #a8a8a8;
`;
const Wordmark = styled.span`
  margin: 7px 0 0 5px;
  font: italic 400 16px/20px Lato, sans-serif;
  b { font-weight: 700; }
`;
const MenuArrow = styled.button`
  width: 21px;
  display: flex;
  align-items: center;
  justify-content: center;
  border-right: 1px solid ${LINE};
`;
const QuickBar = styled.div`
  display: flex;
  align-items: flex-start;
  padding: 1px 0 0 28px;
`;
const DocTitle = styled.h1`
  flex: 1;
  margin: 0;
  padding: 5px 0 0;
  font-size: 11px;
  font-weight: 400;
  line-height: 18px;
  text-align: center;
`;
const SearchBox = styled.label`
  width: 202px;
  height: 23px;
  margin-top: 2px;
  padding: 0 0 0 4px;
  display: flex;
  align-items: center;
  border: 1px solid #bdbdbd;
`;
const SearchInput = styled.input`
  width: 139px;
  height: 19px;
  margin-left: 2px;
  padding: 0 2px;
  border: 0;
  background: #eceef2;
  &::placeholder { color: #666; opacity: 1; }
`;
const WindowButtons = styled.div`
  display: flex;
  padding: 1px 0 0 4px;
  margin-right: -7px;
`;
const FeatureBar = styled.div`
  height: 33px;
  flex: none;
  display: flex;
  align-items: center;
  margin-left: -4px;
  border-bottom: 1px solid ${LINE};
`;
const CommandRow = styled.div`
  height: 22px;
  flex: none;
  display: flex;
  justify-content: space-between;
  background: ${SCENE};
`;
const TabList = styled.div`
  display: flex;
`;
const CommandTab = styled.button<{ $w: number; $active?: boolean }>`
  width: ${(p) => p.$w}px;
  height: 22px;
  line-height: 20px;
  white-space: nowrap;
  border-right: 1px solid ${LINE};
  border-bottom: 1px solid ${(p) => (p.$active ? FACE : LINE)};
  background: ${(p) => (p.$active ? FACE : TAB)};
  ${(p) => p.$active && "padding-right: 8px;"}
`;
const DocButtons = styled.div`
  display: flex;
  padding: 2px 0 0;
  height: 22px;
`;

/* ---------- body ---------- */
const Body = styled.div`
  flex: 1;
  min-height: 0;
  display: flex;
`;
const Panel = styled.aside`
  width: 237px;
  flex: none;
  padding-right: 2px;
  border-right: 1px solid ${LINE};
`;
const Splitter = styled.div`
  height: 16px;
  margin-top: 2px;
  display: flex;
  justify-content: center;
  align-items: center;
  padding-right: 10px;
  border: solid #c0c0c0;
  border-width: 1px 0;
`;
const Dot = styled.span`
  width: 6px;
  height: 6px;
  border: 1px solid #999;
  border-radius: 50%;
  background: #ccc;
`;
const PaneTabs = styled.div`
  display: flex;
  height: 30px;
  padding-top: 4px;
  border-bottom: 1px solid #a0a0a0;
`;
const PaneTab = styled.button<{ $active?: boolean }>`
  width: ${(p) => (p.$active ? 30 : 40)}px;
  height: 26px;
  display: flex;
  align-items: center;
  justify-content: center;
  border: solid ${LINE};
  border-width: ${(p) => (p.$active ? "0 1px 0 0" : "1px 1px 1px 0")};
  background: ${(p) => (p.$active ? FACE : TAB)};
  ${(p) => p.$active && "padding-right: 8px;"}
`;
const PaneMore = styled.button`
  margin-left: auto;
  width: 18px;
`;
const FilterRow = styled.label`
  height: 26px;
  margin-right: 1px;
  display: flex;
  align-items: center;
  gap: 4px;
  margin-left: -3px;
  border: solid #b4b4b4;
  border-width: 0 1px 1px 0;
`;
const FilterInput = styled.input`
  flex: 1;
  min-width: 0;
  height: 20px;
  border: 0;
  background: none;
`;
const Tree = styled.ul`
  padding: 1px 0 2px;
  border-bottom: 1px solid #2418a0;
  box-shadow: inset 0 -2px #2b86c6;
`;
const TreeRow = styled.li<{ $root?: boolean }>`
  height: 22px;
  display: flex;
  align-items: center;
  gap: ${(p) => (p.$root ? 4 : 5)}px;
  margin-left: ${(p) => (p.$root ? -9 : 0)}px;
  line-height: 22px;
  white-space: pre;
  color: #000;
`;
const Angle = styled.span`
  font-family: "DejaVu Sans", sans-serif;
`;
const Expander = styled.span<{ $on?: boolean }>`
  width: 10px;
  height: 2px;
  background: linear-gradient(${(p) => (p.$on ? "#666, #666" : "transparent, transparent")}) 0 0 / 2px 2px no-repeat;
`;
const Scene = styled.main`
  position: relative;
  flex: 1;
  min-width: 0;
  background: ${SCENE};
`;
const ViewBar = styled.div`
  display: flex;
  justify-content: center;
  padding-top: 2px;
`;
const Placed = styled.div<{ $x: number; $y: number }>`
  position: absolute;
  left: ${(p) => p.$x}px;
  top: ${(p) => p.$y}px;
`;
const Handle = styled.button`
  position: absolute;
  left: -1px;
  top: 413px;
  width: 9px;
  height: 39px;
  display: flex;
  align-items: center;
  justify-content: center;
  background: ${FACE};
  border: solid ${LINE};
  border-width: 1px 1px 1px 0;
`;
const TaskPane = styled.nav`
  position: absolute;
  right: 0;
  top: 29px;
  width: 19px;
  overflow: hidden;
  border: solid ${LINE};
  border-width: 1px 0 0 1px;
`;
const TaskTab = styled.button<{ $active?: boolean }>`
  width: 30px;
  height: 24px;
  display: flex;
  align-items: center;
  padding-left: 2px;
  background: ${(p) => (p.$active ? FACE : TAB)};
  border-bottom: 1px solid ${LINE};
`;
const Bubble = styled.div`
  position: absolute;
  right: 0;
  top: 372px;
  width: 12px;
  height: 44px;
  overflow: hidden;
`;
const BubbleButton = styled.button`
  width: 44px;
  height: 44px;
  padding-left: 1px;
  border-radius: 50%;
  border: 3px solid #e4f4e8;
  box-shadow: inset 0 0 0 1px #7c9c84;
  background: #22b24c;
  color: #fff;
  font-size: 11px;
  text-align: left;
`;

/* ---------- bottom ---------- */
const SheetRow = styled.div`
  height: 15px;
  flex: none;
  display: flex;
  background: linear-gradient(${LINE}, ${LINE}) 237px 0 / 100% 1px no-repeat;
`;
const SheetNav = styled.div`
  width: 57px;
  display: flex;
  border: solid #222;
  border-width: 1px 1px 0 0;
  background: #a8a8a8;
`;
const NavButton = styled.button<{ $first?: boolean }>`
  width: ${(p) => (p.$first ? 8 : 16)}px;
  height: 14px;
  overflow: hidden;
  display: flex;
  justify-content: center;
  align-items: center;
  border: 1px solid #929292;
  background: #b0b0b0;
`;
const SheetTab = styled.button<{ $w: number; $active?: boolean }>`
  width: ${(p) => p.$w}px;
  height: 14px;
  padding-left: ${(p) => (p.$active ? 12 : 7)}px;
  line-height: 12px;
  text-align: left;
  white-space: nowrap;
  border-right: 1px solid ${LINE};
  background: ${(p) => (p.$active ? FACE : TAB)};
  color: #000;
`;
const BottomBar = styled.footer`
  position: relative;
  height: 34px;
  flex: none;
  margin-bottom: 1px;
  display: flex;
  align-items: center;
  padding: 2px 0 0 3px;
  border-bottom: 1px solid ${LINE};
`;
const BarEnd = styled.div`
  margin-left: auto;
  padding-right: 3px;
  display: flex;
  align-items: center;
`;
const Ime = styled.div`
  position: absolute;
  right: 46px;
  top: -7px;
  width: 188px;
  height: 24px;
  display: flex;
  align-items: center;
  padding-left: 10px;
  background: #fbfcfe;
  border: 1px solid #b4c4d4;
`;
const ImeButton = styled.button`
  width: 22px;
  height: 22px;
  display: flex;
  align-items: center;
  justify-content: center;
  color: #1c70c8;
  font-size: 15px;
  font-weight: 700;
  line-height: 16px;
`;
const ImeLogo = styled.div`
  position: absolute;
  right: 224px;
  top: -11px;
`;
const Watermark = styled.a`
  position: absolute;
  right: 19px;
  top: 15px;
  font: 700 17px/14px "Open Sans", "Noto Sans CJK SC", sans-serif;
  white-space: nowrap;
  color: #fff;
  text-decoration: none;
  -webkit-text-stroke: 2px #e02828;
  paint-order: stroke fill;
`;

const COMMANDS: [string, number][] = [
  ["特征", 46], ["草图", 56], ["曲面", 56], ["钣金", 56], ["焊件", 56], ["模具工具", 64], ["数据迁移", 64],
  ["直接编辑", 64], ["评估", 56], ["DimXpert", 66], ["SOLIDWORKS 插件", 115], ["Simulation", 73],
  ["SOLIDWORKS MBD", 117], ["分析准备", 64], ["威力曲面設計", 88], ["威力曲面結構修改", 112],
  ["GW3DFeatures", 93], ["GW3DTools", 78], ["KYTool", 56],
];
const TREE: [string, string, boolean?][] = [
  ["history", "History", true], ["sensor", "传感器"], ["note", "注解", true], ["solids", "实体(1)", true],
  ["surfaces", "曲面实体(1)", true], ["sigma", "方程式"], ["options", "材质 <未指定>"], ["plane", "前视基准面"],
  ["plane", "上视基准面"], ["plane", "右视基准面"], ["origin", "原点"], ["extrude", "凸台-拉伸1", true],
  ["extrude", "凸台-拉伸2", true], ["fillet", "圆角1"], ["fillet", "圆角2"], ["plane", "基准面1"],
  ["sketch", "草图4"], ["sketch", "(-) 草图5"], ["sketch", "草图6"], ["sketch", "(-) 草图7"],
  ["plane", "基准面3"], ["surfFill", "曲面填充1", true], ["surfCut", "使用曲面切除1"], ["mirrorPart", "镜向3"],
];
const QUICK = "newDoc v open v publish save v print v cut copy paste del undo v redo v !select v traffic props options gear v".split(" ");
const FEATURES = "extrude revolve sweep loft boundary | cutExtrude hole wizard v cutRevolve cutSweep cutLoft cutBoundary | fillet v pattern v rib draft shell dome freeform deform flex indent wrap intersect mirror scale | refPlane v curve v | !ruler".split(" ");
const VIEWS = "zoomFit zoomArea prevView section annoView orient v display v eye v editApp scene v monitor v sphere camera zebra rainbow measure".split(" ");
const FILTERS = "filterOff filtersOff filters !select v selectOff | fVertex fEdge fFace fSurface fSolid fAxis fPlane fPoint fSketch fSegment fMid fCenter fCline fDim fFinish fGtol fNote fDatum fWeld fWeldBead fTarget fThread fBlock fMass fConn fRoute : cubeFront cubeBack cubeRight cubeLeft cubeBottom cubeTop cubeIso | sketchPick sketchTool sketchMove | stackG stackY : play stop record macroNew macroEdit :".split(" ");
const TOOLS = "bolt angle | pc net globe | gear gearDark trayIcon pin spring bulb".split(" ");

const labelText = (text: string) => (
  <span>
    {text.split(/([<>]+)/).map((part, i) => (i % 2 ? <Angle key={i}>{part}</Angle> : part))}
  </span>
);

const Model = () => (
  <svg width="360" height="605" viewBox="655 175 360 605" role="img" aria-label="倒角-2">
    <defs>
      <linearGradient id="band" gradientUnits="userSpaceOnUse" x1="0" y1="532" x2="0" y2="560">
        <stop offset=".35" stopColor="#fff" /><stop offset="1" stopColor="#bdbdbd" />
      </linearGradient>
      <linearGradient id="round" x1="0" y1="0" x2="0" y2="1">
        <stop offset=".45" stopColor="#fff" /><stop offset="1" stopColor="#aeaeae" />
      </linearGradient>
      <linearGradient id="mauve" x1="0" y1="0" x2="0" y2="1">
        <stop offset=".6" stopColor="#968999" /><stop offset=".72" stopColor="#a495a7" />
      </linearGradient>
      <linearGradient id="rim" x1="0" y1="0" x2="0" y2="1">
        <stop offset=".5" stopColor="#f0efee" /><stop offset=".8" stopColor="#cfcfcf" />
      </linearGradient>
    </defs>
    <g stroke="#000" strokeWidth="1.200" strokeLinejoin="round">
      <path d="M990 209L1007 315 982 735 972 610Q969 565 971 519z" fill="#998c9a" />
      <path d="M682 220L728 218 710 528 663 530z" fill="#fff" />
      <path d="M663 530L710 528Q708 575 710 620L665 621Q661 575 663 530z" fill="url(#round)" />
      <path d="M665 621L710 620 720 745 674 747z" fill="#a8a8a8" />
      <path d="M736 187L728 218 710 528Q708 575 711 620L720 745 731 772 716 562 715 531z" fill="url(#rim)" />
      <path d="M736 187L927 181 906 525 715 531z" fill="#fff" />
      <path d="M715 531L906 525V555L716 562z" fill="url(#band)" />
      <path d="M716 562L906 555 922 765 731 772z" fill="#a8a8a8" />
      <path d="M927 181L944 210 926 521Q923 565 927 612L936 737 922 765 906 555V525z" fill="url(#mauve)" />
      <path d="M944 210L990 209 971 519 926 521z" fill="#fff" />
      <path d="M926 521L971 519Q969 565 972 610L927 612Q923 565 926 521z" fill="url(#round)" />
      <path d="M927 612L972 610 982 735 936 737z" fill="#a8a8a8" />
    </g>
    <g stroke="#0000e8" fill="#0000e8">
      <path d="M822 445L820 428M819 445h7M820 442l5 6M825 442l-5 6M822 441v8" />
      <path d="M819 423l4 7h-5zM823 432l3 7h-6z" stroke="none" />
    </g>
  </svg>
);

const AxisLetter = styled.text`
  font: 11px/11px "Liberation Serif", serif;
`;
const Triad = () => (
  <svg width="50" height="40" viewBox="265 880 50 40" role="img" aria-label="坐标轴">
    <path d="M277 912l1-16" stroke="#8c1818" strokeWidth="4" />
    <path d="M278 890l5 10h-8z" fill="#a82020" />
    <path d="M277 913L275 900" stroke="#145c18" strokeWidth="4" />
    <path d="M274 893l5 11h-10z" fill="#187020" />
    <path d="M278 913l22-1" stroke="#2828c8" strokeWidth="3" />
    <path d="M298 907l9 5-9 5z" fill="#1818b8" />
    <AxisLetter x="269" y="894" fill="#0c7c18">Y</AxisLetter>
    <AxisLetter x="274" y="889" fill="#e81818">X</AxisLetter>
    <AxisLetter x="306" y="915" fill="#1414e0">Z</AxisLetter>
  </svg>
);

export default function App() {
  return (
    <Shell>
      <Global />
      <TitleBar>
        <Brand>
          <svg width="28" height="28" viewBox="0 0 28 28" aria-hidden="true">
            <g fill="none" stroke="#d8241c">
              <path d="M5 1c6-3 8 0 4 4L4 9" strokeWidth="2" />
              <path d="M5 11c8-3 12 0 8 5-3 4-7 7-12 9 3-4 5-7 8-11" strokeWidth="2" />
              <path d="M27 8c-5-1-9-1-8 2s6 4 5 7-5 4-10 4" strokeWidth="3" />
            </g>
          </svg>
          <Wordmark><b>SOLID</b>WORKS</Wordmark>
        </Brand>
        <MenuArrow aria-label="菜单"><Icon name="triangleRight" /></MenuArrow>
        <QuickBar><Strip items={QUICK} /></QuickBar>
        <DocTitle>倒角-2.SLDPRT</DocTitle>
        <SearchBox>
          <Icon name="book" size={18} />
          <SearchInput type="search" placeholder="搜索知识库" aria-label="搜索知识库" />
          <IconButton aria-label="搜索"><Icon name="magnifier" size={19} /></IconButton>
          <Caret />
        </SearchBox>
        <WindowButtons>
          <IconButton aria-label="帮助"><Icon name="help" size={16} /></IconButton>
          <Caret />
          <IconButton aria-label="最小化"><Icon name="min" /></IconButton>
          <IconButton aria-label="还原"><Icon name="restore" size={17} /></IconButton>
          <IconButton aria-label="关闭"><Icon name="close" size={16} /></IconButton>
        </WindowButtons>
      </TitleBar>
      <FeatureBar><Strip items={FEATURES} /></FeatureBar>
      <CommandRow>
        <TabList role="tablist">
          {COMMANDS.map(([label, w], i) => (
            <CommandTab key={label} $w={w} $active={i === 0} role="tab" aria-selected={i === 0}>{label}</CommandTab>
          ))}
        </TabList>
        <DocButtons>
          {["docLeft", "docRight", "docMin", "docRestore", "docClose"].map((n) => (
            <IconButton key={n} aria-label={n}><Icon name={n} size={18} /></IconButton>
          ))}
        </DocButtons>
      </CommandRow>
      <Body>
        <Panel>
          <Splitter><Dot /></Splitter>
          <PaneTabs role="tablist">
            {["part", "listPane", "config", "target", "appearance"].map((n, i) => (
              <PaneTab key={n} $active={i === 0} role="tab" aria-label={n}><Icon name={n} size={19} /></PaneTab>
            ))}
            <PaneMore aria-label="更多"><Icon name="chevron" /></PaneMore>
          </PaneTabs>
          <FilterRow>
            <Icon name="filter" size={18} />
            <FilterInput aria-label="过滤" />
          </FilterRow>
          <Tree>
            <TreeRow $root><Icon name="part" />{labelText("倒角-2  (默认<<默认>_显示状态 1>)")}</TreeRow>
            {TREE.map(([icon, label, on]) => (
              <TreeRow key={label}><Expander $on={on} /><Icon name={icon} size={18} />{labelText(label)}</TreeRow>
            ))}
          </Tree>
        </Panel>
        <Scene>
          <ViewBar><Strip items={VIEWS} caret={14} /></ViewBar>
          <Placed $x={418} $y={91}><Model /></Placed>
          <Placed $x={27} $y={795}><Triad /></Placed>
          <Placed $x={1508} $y={683}>
            <svg width="14" height="21" viewBox="0 0 14 21" aria-hidden="true">
              <path d="M4 1v16l3-3 3 6 2-1-2-6h4z" fill="#fff" stroke="#222" />
            </svg>
          </Placed>
          <Handle aria-label="折叠"><Dot /></Handle>
          <TaskPane>
            {["home", "library", "folderOpen", "palette", "appearance", "listPane", "chat"].map((n, i) => (
              <TaskTab key={n} $active={i === 0} aria-label={n}><Icon name={n} /></TaskTab>
            ))}
          </TaskPane>
          <Bubble><BubbleButton>3</BubbleButton></Bubble>
        </Scene>
      </Body>
      <SheetRow>
        <SheetNav>
          <NavButton $first aria-label="第一页" />
          {["M10 3v8l-6-4z", "M4 3v8l6-4z", "M2 3v8l6-4zM10 3h1v8h-1z"].map((d) => (
            <NavButton key={d} aria-label="翻页"><svg width="14" height="14" viewBox="0 0 14 14"><path d={d} fill="#7c7c7c" /></svg></NavButton>
          ))}
        </SheetNav>
        <SheetTab $w={46} $active>模型</SheetTab>
        <SheetTab $w={57}>3D 视图</SheetTab>
        <SheetTab $w={80}>运动算例 1</SheetTab>
      </SheetRow>
      <BottomBar>
        <Strip items={FILTERS} w={27} sep={8} sepH={22} />
        <Strip items={TOOLS} sep={8} sepH={22} />
        <BarEnd>
          <Strip items={["|", "tray2", "|"]} sep={8} sepH={22} />
        </BarEnd>
        <Ime>
          <ImeButton>英</ImeButton>
          {["comma", "smile", "mic", "keys", "person", "shirt", "wrench"].map((n) => (
            <ImeButton key={n} aria-label={n}><Icon name={n} size={18} /></ImeButton>
          ))}
        </Ime>
        <ImeLogo>
          <svg width="30" height="30" viewBox="0 0 30 30" aria-hidden="true">
            <path d="M2 6L23 1q2 0 3 3l3 18q0 2-3 3L9 28q-3 1-4-2L1 9q0-2 1-3z" fill="#ee5424" />
            <path d="M23 8c-6-3-14-1-14 3 0 5 13 2 13 7 0 4-8 5-13 2" fill="none" stroke="#fff" strokeWidth="4" />
          </svg>
        </ImeLogo>
        <Watermark href="#">三维网www.3dportal.cn</Watermark>
      </BottomBar>
    </Shell>
  );
}
